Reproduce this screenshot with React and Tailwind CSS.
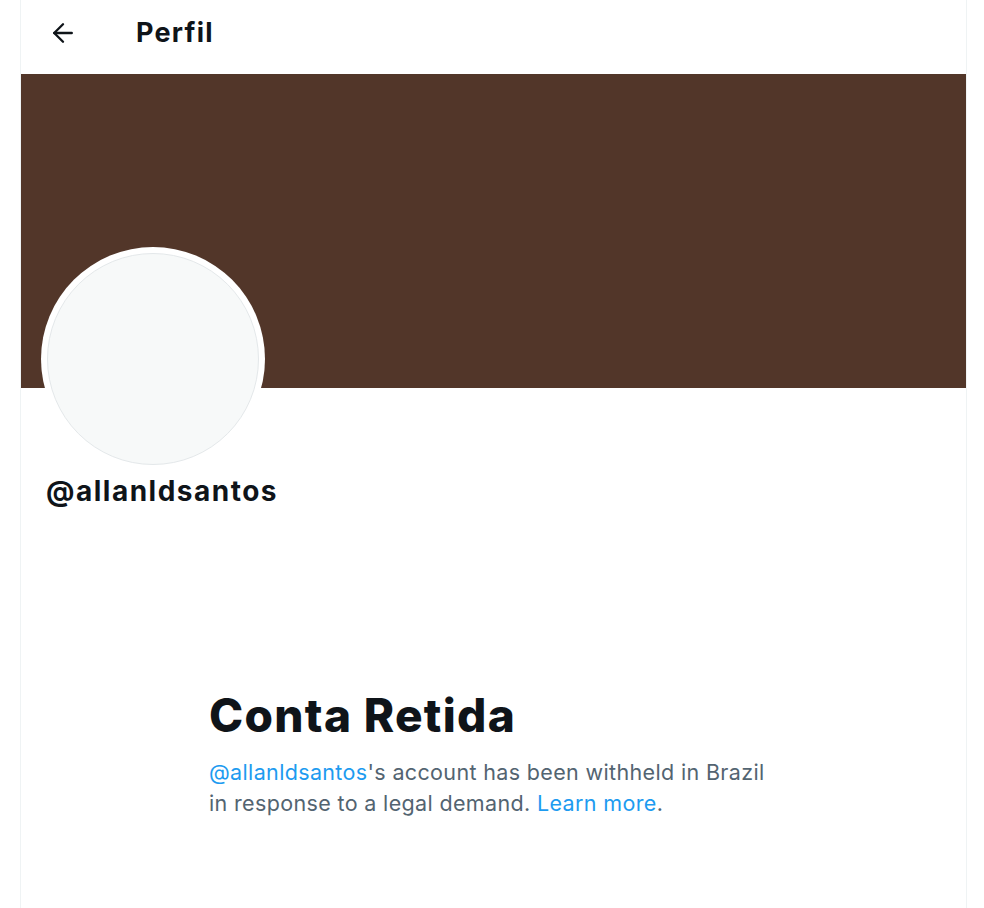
import { ArrowLeft } from 'lucide-react'

export default function App() {
  return (
    <div className="min-h-[908px] bg-white font-['Inter',sans-serif] text-[#0f1419]">
      <div className="ml-[20px] w-[947px] min-h-[908px] border-x border-[#eff3f4]">
        {/* Header */}
        <div className="h-[74px] flex items-center">
          <div className="w-[115px] pl-[27px] -mt-[8px]">
            <ArrowLeft size={30} strokeWidth={1.9} className="text-[#0f1419]" />
          </div>
          <h1 className="text-[27px] font-bold tracking-[1.2px] -mt-[7px]">Perfil</h1>
        </div>

        {/* Banner */}
        <div className="h-[314px] bg-[#523629]" />

        {/* Avatar + handle */}
        <div className="px-[20px]">
          <div className="-mt-[141px] w-[224px] h-[224px] rounded-full bg-white p-[6px]">
            <div className="w-full h-full rounded-full bg-[#f7f9f9] border border-[#e4e8ea]" />
          </div>
          <div className="mt-[2px] text-[28px] font-bold leading-[36px] tracking-[1.5px] pl-[5px]">@allanldsantos</div>
        </div>

        {/* Withheld notice */}
        <div className="pl-[188px] pt-[178px]">
          <h2 className="text-[46px] font-extrabold leading-[56px] tracking-[1.3px]">Conta Retida</h2>
          <p className="mt-[14px] text-[21.5px] leading-[31px] tracking-[0.35px] text-[#536471]">
            <span className="text-[#1d9bf0]">@allanldsantos</span>'s account has been withheld in Brazil
            <br />
            in response to a legal demand. <span className="text-[#1d9bf0]">Learn more</span>.
          </p>
        </div>
      </div>
    </div>
  )
}
